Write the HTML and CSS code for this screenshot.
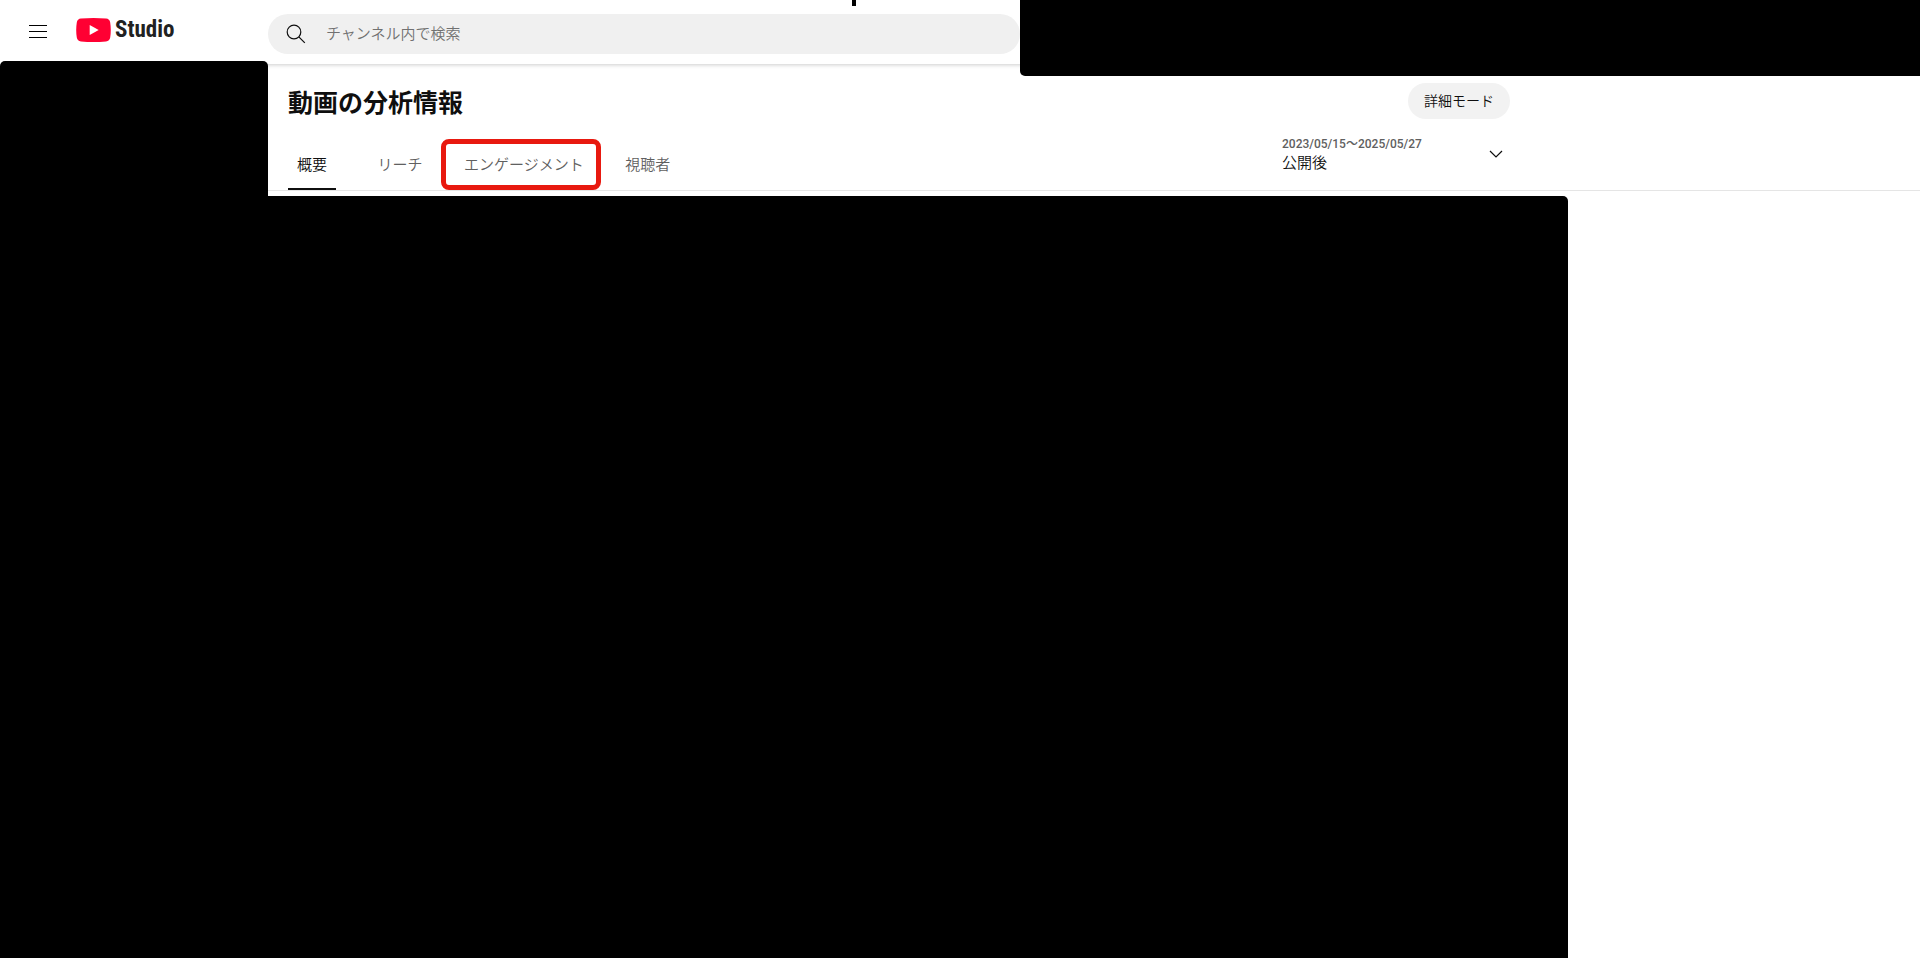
FILE: index.html
```html
<!DOCTYPE html>
<html lang="ja">
<head>
  <title>動画の分析情報 - YouTube Studio</title>
  <meta charset="utf-8">
  <meta name="viewport" content="width=device-width, initial-scale=1">
  <link rel="stylesheet" href="styles.css">
</head>
<body>

  <header class="topbar">
    <div class="brand">
      <button class="menu" aria-label="メニュー">
        <svg width="18" height="14" viewBox="0 0 18 14" fill="#000" shape-rendering="crispEdges"><path d="M0 0h18v1H0zM0 6h18v1H0zM0 12h18v1H0z"/></svg>
      </button>
      <a class="logo" href="#">
        <svg width="35" height="24" viewBox="0 0 35 24"><path fill="#ff0033" d="M5 .6Q17.500-.6 30 .6 33.600.9 34.200 4.500 35.400 12 34.200 19.500 33.600 23.100 30 23.400 17.500 24.600 5 23.400 1.400 23.100.8 19.500-.4 12 .8 4.500 1.400.9 5 .6z"/><path fill="#fff" d="M13.700 7v10l9-5z"/></svg>
        <span>Studio</span>
      </a>
    </div>
    <label class="search">
      <svg width="20" height="20" viewBox="0 0 20 20" fill="none" stroke="#0f0f0f" stroke-width="1.200"><circle cx="8" cy="8" r="6.800"/><path d="M12.800 12.800l6 6"/></svg>
      <input type="text" placeholder="チャンネル内で検索" aria-label="チャンネル内で検索">
    </label>
    <div class="account"></div>
    <div class="caret"></div>
  </header>

  <div class="page">
    <nav class="sidebar"></nav>
    <main>
      <div class="head">
        <div class="title-row">
          <h1>動画の分析情報</h1>
          <button class="advanced">詳細モード</button>
        </div>
        <div class="tab-row">
          <div class="tabs" role="tablist">
            <button class="tab active" role="tab" aria-selected="true">概要</button>
            <button class="tab" role="tab">リーチ</button>
            <button class="tab marked" role="tab">エンゲージメント</button>
            <button class="tab" role="tab">視聴者</button>
          </div>
          <div class="period">
            <div class="period-text">
              <label for="period">2023/05/15～2025/05/27</label>
              <select id="period"><option>公開後</option></select>
            </div>
            <svg width="14" height="8" viewBox="0 0 14 8" fill="none" stroke="#0f0f0f" stroke-width="1.200"><path d="M1 1l6 6 6-6"/></svg>
          </div>
        </div>
      </div>
      <div class="report"></div>
    </main>
  </div>

</body>
</html>
```
FILE: styles.css
```css
* {
  box-sizing: border-box;
}
body {
  margin: 0;
  min-height: 100vh;
  display: flex;
  flex-direction: column;
  background: #fff;
  color: #0f0f0f;
  font: 350 15px/20px Roboto, "Noto Sans CJK JP", sans-serif;
}
button, input, select {
  font: inherit;
  color: inherit;
  border: 0;
  padding: 0;
  background: none;
}
button {
  cursor: pointer;
}
svg {
  display: block;
  flex-shrink: 0;
}

/* top bar */
.topbar {
  position: relative;
  z-index: 1;
  height: 64px;
  display: flex;
  align-items: flex-start;
  background: #fff;
  box-shadow: 0 1px 4px #0003;
}
.brand {
  width: 268px;
  height: 60px;
  padding-left: 29px;
  display: flex;
  align-items: center;
  gap: 29px;
}
.menu {
  padding-top: 4px;
}
.logo {
  display: flex;
  align-items: center;
  gap: 4px;
  color: #212121;
  font: bold 23px/26px "Roboto Condensed", Roboto, sans-serif;
  text-decoration: none;
}
.search {
  flex: 1;
  height: 40px;
  margin-top: 14px;
  padding: 0 18px;
  display: flex;
  align-items: center;
  gap: 20px;
  border-radius: 20px;
  background: #f0f0f0;
}
.search input {
  flex: 1;
  outline: 0;
}
.search input::placeholder {
  color: #717171;
}
.account {
  width: 900px;
  height: 76px;
  border-radius: 0 0 0 5px;
  background: #000;
}
.caret {
  position: absolute;
  top: 0;
  left: 852px;
  width: 4px;
  height: 6px;
  background: #000;
}

/* page */
.page {
  flex: 1;
  display: flex;
}
.sidebar {
  position: relative;
  z-index: 2;
  width: 268px;
  margin-top: -3px;
  border-radius: 5px 5px 0 0;
  background: #000;
}
main {
  flex: 1;
  display: flex;
  flex-direction: column;
}
.head {
  padding: 19px 0 0 20px;
  border-bottom: 1px solid #e5e5e5;
}
.title-row, .tab-row {
  max-width: 1222px;
  display: flex;
  justify-content: space-between;
}
.title-row {
  height: 38px;
}
h1 {
  margin: 0;
  font-size: 25px;
  line-height: 42px;
  font-weight: 700;
}
.advanced {
  height: 36px;
  padding: 0 16px;
  border-radius: 18px;
  background: #f2f2f2;
  font-size: 14px;
}
.tab-row {
  height: 69px;
}
.tabs {
  display: flex;
  gap: 40px;
  align-items: flex-end;
}
.tab {
  position: relative;
  height: 50px;
  min-width: 48px;
  color: #606060;
}
.tab.active {
  color: #0f0f0f;
  border-bottom: 2px solid #0f0f0f;
  padding-top: 2px;
}
.marked::after {
  content: "";
  position: absolute;
  inset: -1px -17px 0 -23px;
  border: 5px solid #e8190f;
  border-radius: 8px;
}
.period {
  width: 228px;
  height: 66px;
  padding-right: 7px;
  display: flex;
  align-items: center;
  justify-content: space-between;
}
.period-text {
  display: flex;
  flex-direction: column;
}
.period label {
  font-size: 12px;
  line-height: 18px;
  font-weight: 500;
  color: #606060;
}
.period select {
  appearance: none;
}
.report {
  flex: 1;
  max-width: 1300px;
  margin-top: 5px;
  border-radius: 0 5px 0 0;
  background: #000;
}
```
